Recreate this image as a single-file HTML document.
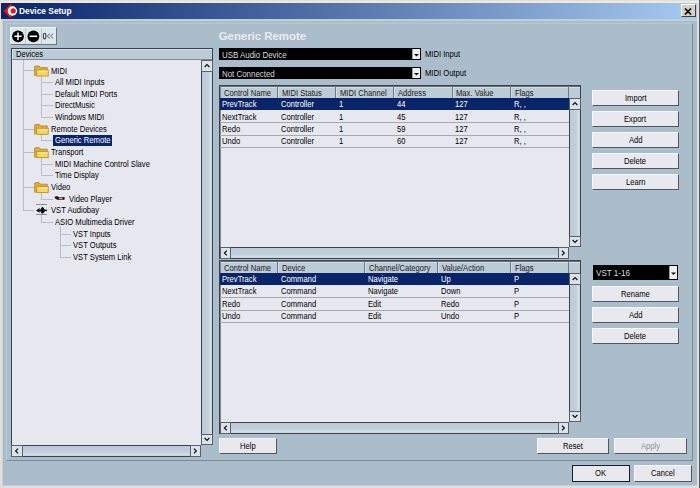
<!DOCTYPE html>
<html><head><meta charset="utf-8">
<style>
*{box-sizing:border-box}
html,body{margin:0;padding:0}
body{width:700px;height:488px;overflow:hidden;position:relative;background:#e2ded8;font-family:"Liberation Sans",sans-serif;font-size:8.4px;color:#000}
.a{position:absolute}
.t{position:absolute;white-space:nowrap}
.btn{position:absolute;background:#e6e7ee;border-top:1px solid #f7f7fb;border-left:1px solid #f7f7fb;border-right:2px solid #6f777e;border-bottom:2px solid #6f777e;text-align:center;line-height:13px;font-size:8.4px;white-space:nowrap}
</style></head><body>
<div class="a" style="left:0px;top:1px;width:700px;height:2px;background:#eeeae0"></div>
<div class="a" style="left:699px;top:0px;width:1px;height:488px;background:#5a5a58"></div>
<div class="a" style="left:2px;top:19px;width:695px;height:467px;background:#abbdcb"></div>
<div class="a" style="left:2px;top:19px;width:1px;height:467px;background:#c3d1db"></div>
<div class="a" style="left:2px;top:19px;width:695px;height:2px;background:#c0ced8"></div>
<div class="a" style="left:2px;top:485px;width:695px;height:1px;background:#bccfdc"></div>
<div class="a" style="left:6px;top:23px;width:687px;height:438px;background:#abbdcb;border-right:1px solid #7b8a96;border-bottom:1px solid #7b8a96;border-left:1px solid #bfcdd7;border-top:1px solid #b9c7d1"></div>
<div class="a" style="left:1px;top:3px;width:696px;height:16px;background:linear-gradient(to right,#0a246a,#a6caf0)"></div>
<svg class="a" style="left:2px;top:3px" width="18" height="16" viewBox="0 0 18 16">
<polygon points="1.3,8 8.2,0.9 15.3,8 8.2,15.1" fill="#e01010"/>
<circle cx="10.4" cy="8" r="4.7" fill="#fff"/>
<polygon points="10.4,3.3 15.3,8 10.4,12.7" fill="#fff"/>
<circle cx="11.2" cy="7.9" r="2.6" fill="#e81818"/>
</svg>
<div class="t" style="left:19.00px;top:4px;line-height:14px;font-size:8.4px;color:#fff;font-weight:bold;">Device Setup</div>
<div class="a" style="left:681px;top:4px;width:15px;height:13px;background:#d4d0c8;border-top:1px solid #fff;border-left:1px solid #fff;border-right:1px solid #404040;border-bottom:1px solid #404040"></div>
<svg class="a" style="left:684px;top:8px" width="8" height="7" viewBox="0 0 8 7"><path d="M1,0.5 L7,6.5 M7,0.5 L1,6.5" stroke="#000" stroke-width="1.6"/></svg>
<div class="a" style="left:10px;top:27px;width:47px;height:18px;background:#dee7eb;border-top:1px solid #f0f4f6;border-left:1px solid #f0f4f6;border-right:1px solid #6c7780;border-bottom:1px solid #6c7780"></div>
<div class="a" style="left:25px;top:28px;width:1px;height:16px;background:#c0cad0"></div>
<div class="a" style="left:41px;top:28px;width:1px;height:16px;background:#c0cad0"></div>
<div class="a" style="left:11px;top:48px;width:202px;height:409px;background:#e7e8ef;border:1px solid #3b444d"></div>
<div class="a" style="left:12px;top:49px;width:200px;height:11px;background:#bccbd6;border-bottom:1px solid #7d8b96;border-top:1px solid #d3dee6;border-left:1px solid #d3dee6"></div>
<div class="t" style="left:15.80px;top:47px;line-height:14px;font-size:8.4px;transform:scaleX(0.91);transform-origin:0 0;">Devices</div>
<div class="a" style="left:201px;top:60px;width:12px;height:385px;background:linear-gradient(to right,#bccad6,#c2cfda 60%,#d3dde6 85%,#c6d2dc);border-left:1px solid #3b444d;border-right:1px solid #3b444d"></div>
<div class="a" style="left:201px;top:60px;width:12px;height:11.5px;background:#dde3ea;box-shadow:inset 0 0 0 1px #56616b;"></div>
<div class="a" style="left:201px;top:433.5px;width:12px;height:11.5px;background:#dde3ea;box-shadow:inset 0 0 0 1px #56616b;"></div>
<div class="a" style="left:201px;top:445px;width:12px;height:12px;background:#abbdcb"></div>
<div class="a" style="left:11px;top:445px;width:190px;height:12px;background:linear-gradient(to bottom,#bccad6,#c2cfda 60%,#d3dde6 85%,#c6d2dc);border-top:1px solid #3b444d;border-bottom:1px solid #3b444d;border-left:1px solid #3b444d"></div>
<div class="a" style="left:11px;top:445px;width:11.5px;height:12px;background:#dde3ea;box-shadow:inset 0 0 0 1px #56616b;"></div>
<div class="a" style="left:189.5px;top:445px;width:11.5px;height:12px;background:#dde3ea;box-shadow:inset 0 0 0 1px #56616b;"></div>
<div class="a" style="left:23px;top:60px;width:1px;height:151px;background:#b9bdc4"></div>
<div class="a" style="left:24px;top:70px;width:10px;height:1px;background:#b9bdc4"></div>
<div class="t" style="left:51.30px;top:64px;line-height:14px;font-size:8.4px;transform:scaleX(0.91);transform-origin:0 0;">MIDI</div>
<div class="a" style="left:41px;top:82px;width:12px;height:1px;background:#b9bdc4"></div>
<div class="t" style="left:54.80px;top:75px;line-height:14px;font-size:8.4px;transform:scaleX(0.91);transform-origin:0 0;">All MIDI Inputs</div>
<div class="a" style="left:41px;top:94px;width:12px;height:1px;background:#b9bdc4"></div>
<div class="t" style="left:54.80px;top:87px;line-height:14px;font-size:8.4px;transform:scaleX(0.91);transform-origin:0 0;">Default MIDI Ports</div>
<div class="a" style="left:41px;top:105px;width:12px;height:1px;background:#b9bdc4"></div>
<div class="t" style="left:54.80px;top:98px;line-height:14px;font-size:8.4px;transform:scaleX(0.91);transform-origin:0 0;">DirectMusic</div>
<div class="a" style="left:41px;top:117px;width:12px;height:1px;background:#b9bdc4"></div>
<div class="t" style="left:54.80px;top:110px;line-height:14px;font-size:8.4px;transform:scaleX(0.91);transform-origin:0 0;">Windows MIDI</div>
<div class="a" style="left:24px;top:129px;width:10px;height:1px;background:#b9bdc4"></div>
<div class="t" style="left:51.30px;top:122px;line-height:14px;font-size:8.4px;transform:scaleX(0.91);transform-origin:0 0;">Remote Devices</div>
<div class="a" style="left:41px;top:140px;width:12px;height:1px;background:#b9bdc4"></div>
<div class="a" style="left:52.5px;top:135px;width:59.5px;height:11px;background:#0a246a"></div>
<div class="t" style="left:54.80px;top:133px;line-height:14px;font-size:8.4px;color:#fff;transform:scaleX(0.91);transform-origin:0 0;">Generic Remote</div>
<div class="a" style="left:24px;top:152px;width:10px;height:1px;background:#b9bdc4"></div>
<div class="t" style="left:51.30px;top:145px;line-height:14px;font-size:8.4px;transform:scaleX(0.91);transform-origin:0 0;">Transport</div>
<div class="a" style="left:41px;top:164px;width:12px;height:1px;background:#b9bdc4"></div>
<div class="t" style="left:54.80px;top:157px;line-height:14px;font-size:8.4px;transform:scaleX(0.91);transform-origin:0 0;">MIDI Machine Control Slave</div>
<div class="a" style="left:41px;top:175px;width:12px;height:1px;background:#b9bdc4"></div>
<div class="t" style="left:54.80px;top:168px;line-height:14px;font-size:8.4px;transform:scaleX(0.91);transform-origin:0 0;">Time Display</div>
<div class="a" style="left:24px;top:187px;width:10px;height:1px;background:#b9bdc4"></div>
<div class="t" style="left:51.30px;top:180px;line-height:14px;font-size:8.4px;transform:scaleX(0.91);transform-origin:0 0;">Video</div>
<div class="a" style="left:41px;top:199px;width:12px;height:1px;background:#b9bdc4"></div>
<div class="t" style="left:68.60px;top:192px;line-height:14px;font-size:8.4px;transform:scaleX(0.91);transform-origin:0 0;">Video Player</div>
<div class="a" style="left:24px;top:210px;width:10px;height:1px;background:#b9bdc4"></div>
<div class="a" style="left:36px;top:204px;width:11px;height:1px;background:#8a9098"></div>
<div class="a" style="left:36px;top:214px;width:11px;height:1px;background:#8a9098"></div>
<div class="t" style="left:50.50px;top:203px;line-height:14px;font-size:8.4px;transform:scaleX(0.91);transform-origin:0 0;">VST Audiobay</div>
<div class="a" style="left:41px;top:222px;width:12px;height:1px;background:#b9bdc4"></div>
<div class="t" style="left:54.80px;top:215px;line-height:14px;font-size:8.4px;transform:scaleX(0.91);transform-origin:0 0;">ASIO Multimedia Driver</div>
<div class="a" style="left:60px;top:234px;width:11px;height:1px;background:#b9bdc4"></div>
<div class="t" style="left:72.70px;top:227px;line-height:14px;font-size:8.4px;transform:scaleX(0.91);transform-origin:0 0;">VST Inputs</div>
<div class="a" style="left:60px;top:245px;width:11px;height:1px;background:#b9bdc4"></div>
<div class="t" style="left:72.70px;top:238px;line-height:14px;font-size:8.4px;transform:scaleX(0.91);transform-origin:0 0;">VST Outputs</div>
<div class="a" style="left:60px;top:257px;width:11px;height:1px;background:#b9bdc4"></div>
<div class="t" style="left:72.70px;top:250px;line-height:14px;font-size:8.4px;transform:scaleX(0.91);transform-origin:0 0;">VST System Link</div>
<div class="a" style="left:41px;top:75px;width:1px;height:43px;background:#b9bdc4"></div>
<div class="a" style="left:41px;top:134px;width:1px;height:7px;background:#b9bdc4"></div>
<div class="a" style="left:41px;top:157px;width:1px;height:19px;background:#b9bdc4"></div>
<div class="a" style="left:41px;top:192px;width:1px;height:8px;background:#b9bdc4"></div>
<div class="a" style="left:41px;top:215px;width:1px;height:8px;background:#b9bdc4"></div>
<div class="a" style="left:60px;top:227px;width:1px;height:31px;background:#b9bdc4"></div>
<div class="t" style="left:218.70px;top:29px;line-height:14px;font-size:11.4px;color:#e8ecf0;font-weight:bold;">Generic Remote</div>
<div class="a" style="left:219px;top:48px;width:202px;height:12px;background:#000"></div>
<div class="t" style="left:222.00px;top:48px;line-height:14px;font-size:8.7px;color:#dadada;transform:scaleX(0.91);transform-origin:0 0;">USB Audio Device</div>
<div class="a" style="left:412px;top:49px;width:8px;height:10px;background:#eceef2;border-left:1px solid #9aa0a6"></div>
<div class="a" style="left:219px;top:67px;width:202px;height:12px;background:#000"></div>
<div class="t" style="left:222.00px;top:67px;line-height:14px;font-size:8.7px;color:#dadada;transform:scaleX(0.91);transform-origin:0 0;">Not Connected</div>
<div class="a" style="left:412px;top:68px;width:8px;height:10px;background:#eceef2;border-left:1px solid #9aa0a6"></div>
<div class="t" style="left:424.60px;top:47px;line-height:14px;font-size:8.4px;transform:scaleX(0.91);transform-origin:0 0;">MIDI Input</div>
<div class="t" style="left:424.60px;top:66px;line-height:14px;font-size:8.4px;transform:scaleX(0.91);transform-origin:0 0;">MIDI Output</div>
<div class="a" style="left:219px;top:85px;width:350px;height:162px;background:#e7e8ef"></div>
<div class="a" style="left:219px;top:85px;width:362px;height:1px;background:#3b444d"></div>
<div class="a" style="left:220px;top:86px;width:360px;height:1px;background:#66717b"></div>
<div class="a" style="left:219px;top:85px;width:1px;height:162px;background:#3b444d"></div>
<div class="a" style="left:220px;top:86px;width:1px;height:161px;background:#7d8893"></div>
<div class="a" style="left:580px;top:85px;width:1px;height:162px;background:#3b444d"></div>
<div class="a" style="left:221px;top:87px;width:359px;height:11px;background:#bccbd6;border-top:1px solid #d3dee6"></div>
<div class="t" style="left:223.80px;top:86px;line-height:14px;font-size:8.4px;color:#1a1a1a;transform:scaleX(0.91);transform-origin:0 0;">Control Name</div>
<div class="a" style="left:277px;top:86px;width:1px;height:12px;background:#6f7c87"></div>
<div class="a" style="left:278px;top:87px;width:1px;height:11px;background:#d2dde5"></div>
<div class="t" style="left:281.60px;top:86px;line-height:14px;font-size:8.4px;color:#1a1a1a;transform:scaleX(0.91);transform-origin:0 0;">MIDI Status</div>
<div class="a" style="left:335px;top:86px;width:1px;height:12px;background:#6f7c87"></div>
<div class="a" style="left:336px;top:87px;width:1px;height:11px;background:#d2dde5"></div>
<div class="t" style="left:339.70px;top:86px;line-height:14px;font-size:8.4px;color:#1a1a1a;transform:scaleX(0.91);transform-origin:0 0;">MIDI Channel</div>
<div class="a" style="left:393px;top:86px;width:1px;height:12px;background:#6f7c87"></div>
<div class="a" style="left:394px;top:87px;width:1px;height:11px;background:#d2dde5"></div>
<div class="t" style="left:397.60px;top:86px;line-height:14px;font-size:8.4px;color:#1a1a1a;transform:scaleX(0.91);transform-origin:0 0;">Address</div>
<div class="a" style="left:452px;top:86px;width:1px;height:12px;background:#6f7c87"></div>
<div class="a" style="left:453px;top:87px;width:1px;height:11px;background:#d2dde5"></div>
<div class="t" style="left:456.40px;top:86px;line-height:14px;font-size:8.4px;color:#1a1a1a;transform:scaleX(0.91);transform-origin:0 0;">Max. Value</div>
<div class="a" style="left:510px;top:86px;width:1px;height:12px;background:#6f7c87"></div>
<div class="a" style="left:511px;top:87px;width:1px;height:11px;background:#d2dde5"></div>
<div class="t" style="left:514.90px;top:86px;line-height:14px;font-size:8.4px;color:#1a1a1a;transform:scaleX(0.91);transform-origin:0 0;">Flags</div>
<div class="a" style="left:568px;top:86px;width:1px;height:12px;background:#6f7c87"></div>
<div class="a" style="left:220px;top:98.20px;width:349px;height:12.30px;background:#0a246a"></div>
<div class="t" style="left:222.40px;top:97px;line-height:14px;font-size:8.4px;color:#fff;transform:scaleX(0.91);transform-origin:0 0;">PrevTrack</div>
<div class="t" style="left:280.60px;top:97px;line-height:14px;font-size:8.4px;color:#fff;transform:scaleX(0.91);transform-origin:0 0;">Controller</div>
<div class="t" style="left:338.70px;top:97px;line-height:14px;font-size:8.4px;color:#fff;transform:scaleX(0.91);transform-origin:0 0;">1</div>
<div class="t" style="left:396.60px;top:97px;line-height:14px;font-size:8.4px;color:#fff;transform:scaleX(0.91);transform-origin:0 0;">44</div>
<div class="t" style="left:455.40px;top:97px;line-height:14px;font-size:8.4px;color:#fff;transform:scaleX(0.91);transform-origin:0 0;">127</div>
<div class="t" style="left:513.90px;top:97px;line-height:14px;font-size:8.4px;color:#fff;transform:scaleX(0.91);transform-origin:0 0;">R, ,</div>
<div class="a" style="left:220px;top:122px;width:349px;height:1px;background:#a2abb3"></div>
<div class="t" style="left:222.40px;top:110px;line-height:14px;font-size:8.4px;color:#000;transform:scaleX(0.91);transform-origin:0 0;">NextTrack</div>
<div class="t" style="left:280.60px;top:110px;line-height:14px;font-size:8.4px;color:#000;transform:scaleX(0.91);transform-origin:0 0;">Controller</div>
<div class="t" style="left:338.70px;top:110px;line-height:14px;font-size:8.4px;color:#000;transform:scaleX(0.91);transform-origin:0 0;">1</div>
<div class="t" style="left:396.60px;top:110px;line-height:14px;font-size:8.4px;color:#000;transform:scaleX(0.91);transform-origin:0 0;">45</div>
<div class="t" style="left:455.40px;top:110px;line-height:14px;font-size:8.4px;color:#000;transform:scaleX(0.91);transform-origin:0 0;">127</div>
<div class="t" style="left:513.90px;top:110px;line-height:14px;font-size:8.4px;color:#000;transform:scaleX(0.91);transform-origin:0 0;">R, ,</div>
<div class="a" style="left:220px;top:135px;width:349px;height:1px;background:#a2abb3"></div>
<div class="t" style="left:222.40px;top:122px;line-height:14px;font-size:8.4px;color:#000;transform:scaleX(0.91);transform-origin:0 0;">Redo</div>
<div class="t" style="left:280.60px;top:122px;line-height:14px;font-size:8.4px;color:#000;transform:scaleX(0.91);transform-origin:0 0;">Controller</div>
<div class="t" style="left:338.70px;top:122px;line-height:14px;font-size:8.4px;color:#000;transform:scaleX(0.91);transform-origin:0 0;">1</div>
<div class="t" style="left:396.60px;top:122px;line-height:14px;font-size:8.4px;color:#000;transform:scaleX(0.91);transform-origin:0 0;">59</div>
<div class="t" style="left:455.40px;top:122px;line-height:14px;font-size:8.4px;color:#000;transform:scaleX(0.91);transform-origin:0 0;">127</div>
<div class="t" style="left:513.90px;top:122px;line-height:14px;font-size:8.4px;color:#000;transform:scaleX(0.91);transform-origin:0 0;">R, ,</div>
<div class="a" style="left:220px;top:147px;width:349px;height:1px;background:#a2abb3"></div>
<div class="t" style="left:222.40px;top:134px;line-height:14px;font-size:8.4px;color:#000;transform:scaleX(0.91);transform-origin:0 0;">Undo</div>
<div class="t" style="left:280.60px;top:134px;line-height:14px;font-size:8.4px;color:#000;transform:scaleX(0.91);transform-origin:0 0;">Controller</div>
<div class="t" style="left:338.70px;top:134px;line-height:14px;font-size:8.4px;color:#000;transform:scaleX(0.91);transform-origin:0 0;">1</div>
<div class="t" style="left:396.60px;top:134px;line-height:14px;font-size:8.4px;color:#000;transform:scaleX(0.91);transform-origin:0 0;">60</div>
<div class="t" style="left:455.40px;top:134px;line-height:14px;font-size:8.4px;color:#000;transform:scaleX(0.91);transform-origin:0 0;">127</div>
<div class="t" style="left:513.90px;top:134px;line-height:14px;font-size:8.4px;color:#000;transform:scaleX(0.91);transform-origin:0 0;">R, ,</div>
<div class="a" style="left:569px;top:98px;width:12px;height:149px;background:linear-gradient(to right,#bccad6,#c2cfda 60%,#d3dde6 85%,#c6d2dc);border-left:1px solid #3b444d;border-right:1px solid #3b444d"></div>
<div class="a" style="left:569px;top:98px;width:12px;height:11.5px;background:#dde3ea;box-shadow:inset 0 0 0 1px #56616b;"></div>
<div class="a" style="left:569px;top:235.5px;width:12px;height:11.5px;background:#dde3ea;box-shadow:inset 0 0 0 1px #56616b;"></div>
<div class="a" style="left:219px;top:247px;width:350px;height:12px;background:linear-gradient(to bottom,#bccad6,#c2cfda 60%,#d3dde6 85%,#c6d2dc);border:1px solid #3b444d;border-right:none"></div>
<div class="a" style="left:220px;top:247px;width:11px;height:12px;background:#dde3ea;box-shadow:inset 0 0 0 1px #56616b;"></div>
<div class="a" style="left:557.5px;top:247px;width:11.5px;height:12px;background:#dde3ea;box-shadow:inset 0 0 0 1px #56616b;"></div>
<div class="a" style="left:219px;top:260px;width:350px;height:162px;background:#e7e8ef"></div>
<div class="a" style="left:219px;top:260px;width:362px;height:1px;background:#3b444d"></div>
<div class="a" style="left:220px;top:261px;width:360px;height:1px;background:#66717b"></div>
<div class="a" style="left:219px;top:260px;width:1px;height:162px;background:#3b444d"></div>
<div class="a" style="left:220px;top:261px;width:1px;height:161px;background:#7d8893"></div>
<div class="a" style="left:580px;top:260px;width:1px;height:162px;background:#3b444d"></div>
<div class="a" style="left:221px;top:262px;width:359px;height:11px;background:#bccbd6;border-top:1px solid #d3dee6"></div>
<div class="t" style="left:223.80px;top:261px;line-height:14px;font-size:8.4px;color:#1a1a1a;transform:scaleX(0.91);transform-origin:0 0;">Control Name</div>
<div class="a" style="left:277px;top:261px;width:1px;height:12px;background:#6f7c87"></div>
<div class="a" style="left:278px;top:262px;width:1px;height:11px;background:#d2dde5"></div>
<div class="t" style="left:281.60px;top:261px;line-height:14px;font-size:8.4px;color:#1a1a1a;transform:scaleX(0.91);transform-origin:0 0;">Device</div>
<div class="a" style="left:364px;top:261px;width:1px;height:12px;background:#6f7c87"></div>
<div class="a" style="left:365px;top:262px;width:1px;height:11px;background:#d2dde5"></div>
<div class="t" style="left:369.10px;top:261px;line-height:14px;font-size:8.4px;color:#1a1a1a;transform:scaleX(0.91);transform-origin:0 0;">Channel/Category</div>
<div class="a" style="left:437px;top:261px;width:1px;height:12px;background:#6f7c87"></div>
<div class="a" style="left:438px;top:262px;width:1px;height:11px;background:#d2dde5"></div>
<div class="t" style="left:441.80px;top:261px;line-height:14px;font-size:8.4px;color:#1a1a1a;transform:scaleX(0.91);transform-origin:0 0;">Value/Action</div>
<div class="a" style="left:510px;top:261px;width:1px;height:12px;background:#6f7c87"></div>
<div class="a" style="left:511px;top:262px;width:1px;height:11px;background:#d2dde5"></div>
<div class="t" style="left:514.90px;top:261px;line-height:14px;font-size:8.4px;color:#1a1a1a;transform:scaleX(0.91);transform-origin:0 0;">Flags</div>
<div class="a" style="left:568px;top:261px;width:1px;height:12px;background:#6f7c87"></div>
<div class="a" style="left:220px;top:273.20px;width:349px;height:12.30px;background:#0a246a"></div>
<div class="t" style="left:222.40px;top:272px;line-height:14px;font-size:8.4px;color:#fff;transform:scaleX(0.91);transform-origin:0 0;">PrevTrack</div>
<div class="t" style="left:280.60px;top:272px;line-height:14px;font-size:8.4px;color:#fff;transform:scaleX(0.91);transform-origin:0 0;">Command</div>
<div class="t" style="left:368.10px;top:272px;line-height:14px;font-size:8.4px;color:#fff;transform:scaleX(0.91);transform-origin:0 0;">Navigate</div>
<div class="t" style="left:440.80px;top:272px;line-height:14px;font-size:8.4px;color:#fff;transform:scaleX(0.91);transform-origin:0 0;">Up</div>
<div class="t" style="left:513.90px;top:272px;line-height:14px;font-size:8.4px;color:#fff;transform:scaleX(0.91);transform-origin:0 0;">P</div>
<div class="a" style="left:220px;top:297px;width:349px;height:1px;background:#a2abb3"></div>
<div class="t" style="left:222.40px;top:284px;line-height:14px;font-size:8.4px;color:#000;transform:scaleX(0.91);transform-origin:0 0;">NextTrack</div>
<div class="t" style="left:280.60px;top:284px;line-height:14px;font-size:8.4px;color:#000;transform:scaleX(0.91);transform-origin:0 0;">Command</div>
<div class="t" style="left:368.10px;top:284px;line-height:14px;font-size:8.4px;color:#000;transform:scaleX(0.91);transform-origin:0 0;">Navigate</div>
<div class="t" style="left:440.80px;top:284px;line-height:14px;font-size:8.4px;color:#000;transform:scaleX(0.91);transform-origin:0 0;">Down</div>
<div class="t" style="left:513.90px;top:284px;line-height:14px;font-size:8.4px;color:#000;transform:scaleX(0.91);transform-origin:0 0;">P</div>
<div class="a" style="left:220px;top:310px;width:349px;height:1px;background:#a2abb3"></div>
<div class="t" style="left:222.40px;top:297px;line-height:14px;font-size:8.4px;color:#000;transform:scaleX(0.91);transform-origin:0 0;">Redo</div>
<div class="t" style="left:280.60px;top:297px;line-height:14px;font-size:8.4px;color:#000;transform:scaleX(0.91);transform-origin:0 0;">Command</div>
<div class="t" style="left:368.10px;top:297px;line-height:14px;font-size:8.4px;color:#000;transform:scaleX(0.91);transform-origin:0 0;">Edit</div>
<div class="t" style="left:440.80px;top:297px;line-height:14px;font-size:8.4px;color:#000;transform:scaleX(0.91);transform-origin:0 0;">Redo</div>
<div class="t" style="left:513.90px;top:297px;line-height:14px;font-size:8.4px;color:#000;transform:scaleX(0.91);transform-origin:0 0;">P</div>
<div class="a" style="left:220px;top:322px;width:349px;height:1px;background:#a2abb3"></div>
<div class="t" style="left:222.40px;top:309px;line-height:14px;font-size:8.4px;color:#000;transform:scaleX(0.91);transform-origin:0 0;">Undo</div>
<div class="t" style="left:280.60px;top:309px;line-height:14px;font-size:8.4px;color:#000;transform:scaleX(0.91);transform-origin:0 0;">Command</div>
<div class="t" style="left:368.10px;top:309px;line-height:14px;font-size:8.4px;color:#000;transform:scaleX(0.91);transform-origin:0 0;">Edit</div>
<div class="t" style="left:440.80px;top:309px;line-height:14px;font-size:8.4px;color:#000;transform:scaleX(0.91);transform-origin:0 0;">Undo</div>
<div class="t" style="left:513.90px;top:309px;line-height:14px;font-size:8.4px;color:#000;transform:scaleX(0.91);transform-origin:0 0;">P</div>
<div class="a" style="left:569px;top:273px;width:12px;height:149px;background:linear-gradient(to right,#bccad6,#c2cfda 60%,#d3dde6 85%,#c6d2dc);border-left:1px solid #3b444d;border-right:1px solid #3b444d"></div>
<div class="a" style="left:569px;top:273px;width:12px;height:11.5px;background:#dde3ea;box-shadow:inset 0 0 0 1px #56616b;"></div>
<div class="a" style="left:569px;top:410.5px;width:12px;height:11.5px;background:#dde3ea;box-shadow:inset 0 0 0 1px #56616b;"></div>
<div class="a" style="left:219px;top:422px;width:350px;height:12px;background:linear-gradient(to bottom,#bccad6,#c2cfda 60%,#d3dde6 85%,#c6d2dc);border:1px solid #3b444d;border-right:none"></div>
<div class="a" style="left:220px;top:422px;width:11px;height:12px;background:#dde3ea;box-shadow:inset 0 0 0 1px #56616b;"></div>
<div class="a" style="left:557.5px;top:422px;width:11.5px;height:12px;background:#dde3ea;box-shadow:inset 0 0 0 1px #56616b;"></div>
<div class="a" style="left:592px;top:90px;width:87px;height:16px;background:#e8e8ef;border-top:1px solid #f8f8fc;border-left:1px solid #f8f8fc;border-right:1px solid #4f5861;border-bottom:1px solid #4f5861;"></div>
<div class="t" style="left:624.67px;top:91px;line-height:14px;font-size:8.4px;transform:scaleX(0.91);transform-origin:0 0;">Import</div>
<div class="a" style="left:592px;top:111px;width:87px;height:16px;background:#e8e8ef;border-top:1px solid #f8f8fc;border-left:1px solid #f8f8fc;border-right:1px solid #4f5861;border-bottom:1px solid #4f5861;"></div>
<div class="t" style="left:624.45px;top:112px;line-height:14px;font-size:8.4px;transform:scaleX(0.91);transform-origin:0 0;">Export</div>
<div class="a" style="left:592px;top:132px;width:87px;height:16px;background:#e8e8ef;border-top:1px solid #f8f8fc;border-left:1px solid #f8f8fc;border-right:1px solid #4f5861;border-bottom:1px solid #4f5861;"></div>
<div class="t" style="left:628.70px;top:133px;line-height:14px;font-size:8.4px;transform:scaleX(0.91);transform-origin:0 0;">Add</div>
<div class="a" style="left:592px;top:153px;width:87px;height:16px;background:#e8e8ef;border-top:1px solid #f8f8fc;border-left:1px solid #f8f8fc;border-right:1px solid #4f5861;border-bottom:1px solid #4f5861;"></div>
<div class="t" style="left:624.45px;top:154px;line-height:14px;font-size:8.4px;transform:scaleX(0.91);transform-origin:0 0;">Delete</div>
<div class="a" style="left:592px;top:174px;width:87px;height:16px;background:#e8e8ef;border-top:1px solid #f8f8fc;border-left:1px solid #f8f8fc;border-right:1px solid #4f5861;border-bottom:1px solid #4f5861;"></div>
<div class="t" style="left:625.72px;top:175px;line-height:14px;font-size:8.4px;transform:scaleX(0.91);transform-origin:0 0;">Learn</div>
<div class="a" style="left:593px;top:265px;width:85px;height:15px;background:#000"></div>
<div class="t" style="left:596.00px;top:266px;line-height:14px;font-size:8.9px;color:#dcdcdc;transform:scaleX(0.91);transform-origin:0 0;">VST 1-16</div>
<div class="a" style="left:669px;top:266px;width:8px;height:13px;background:#eceef2;border-left:1px solid #9aa0a6"></div>
<div class="a" style="left:592px;top:286px;width:87px;height:16px;background:#e8e8ef;border-top:1px solid #f8f8fc;border-left:1px solid #f8f8fc;border-right:1px solid #4f5861;border-bottom:1px solid #4f5861;"></div>
<div class="t" style="left:621.05px;top:287px;line-height:14px;font-size:8.4px;transform:scaleX(0.91);transform-origin:0 0;">Rename</div>
<div class="a" style="left:592px;top:307px;width:87px;height:16px;background:#e8e8ef;border-top:1px solid #f8f8fc;border-left:1px solid #f8f8fc;border-right:1px solid #4f5861;border-bottom:1px solid #4f5861;"></div>
<div class="t" style="left:628.70px;top:308px;line-height:14px;font-size:8.4px;transform:scaleX(0.91);transform-origin:0 0;">Add</div>
<div class="a" style="left:592px;top:328px;width:87px;height:16px;background:#e8e8ef;border-top:1px solid #f8f8fc;border-left:1px solid #f8f8fc;border-right:1px solid #4f5861;border-bottom:1px solid #4f5861;"></div>
<div class="t" style="left:624.45px;top:329px;line-height:14px;font-size:8.4px;transform:scaleX(0.91);transform-origin:0 0;">Delete</div>
<div class="a" style="left:219px;top:438px;width:58px;height:16px;background:#e8e8ef;border-top:1px solid #f8f8fc;border-left:1px solid #f8f8fc;border-right:1px solid #4f5861;border-bottom:1px solid #4f5861;"></div>
<div class="t" style="left:240.14px;top:439px;line-height:14px;font-size:8.4px;transform:scaleX(0.91);transform-origin:0 0;">Help</div>
<div class="a" style="left:537px;top:438px;width:72px;height:16px;background:#e8e8ef;border-top:1px solid #f8f8fc;border-left:1px solid #f8f8fc;border-right:1px solid #4f5861;border-bottom:1px solid #4f5861;"></div>
<div class="t" style="left:563.02px;top:439px;line-height:14px;font-size:8.4px;transform:scaleX(0.91);transform-origin:0 0;">Reset</div>
<div class="a" style="left:614px;top:438px;width:73px;height:16px;background:#e8e8ef;border-top:1px solid #f8f8fc;border-left:1px solid #f8f8fc;border-right:1px solid #4f5861;border-bottom:1px solid #4f5861;"></div>
<div class="t" style="left:640.94px;top:439px;line-height:14px;font-size:8.4px;color:#8c949c;transform:scaleX(0.91);transform-origin:0 0;">Apply</div>
<div class="a" style="left:572px;top:465px;width:58px;height:17px;background:#e8e8ef;border:1px solid #1a1e22;"></div>
<div class="t" style="left:595.48px;top:466px;line-height:14px;font-size:8.4px;transform:scaleX(0.91);transform-origin:0 0;">OK</div>
<div class="a" style="left:634px;top:465px;width:58px;height:17px;background:#e8e8ef;border-top:1px solid #f8f8fc;border-left:1px solid #f8f8fc;border-right:1px solid #4f5861;border-bottom:1px solid #4f5861;"></div>
<div class="t" style="left:651.10px;top:466px;line-height:14px;font-size:8.4px;transform:scaleX(0.91);transform-origin:0 0;">Cancel</div>
<svg class="a" style="left:0;top:0" width="700" height="488" viewBox="0 0 700 488"><circle cx="18" cy="36.3" r="5.9" fill="#000"/><path d="M18,32.6V40M14.3,36.3H21.7" stroke="#fff" stroke-width="1.5"/><circle cx="33.4" cy="36.3" r="5.9" fill="#000"/><path d="M29.6,36.3H37.2" stroke="#fff" stroke-width="1.6"/><ellipse cx="44.6" cy="36.1" rx="1.3" ry="2.8" fill="none" stroke="#3c444c" stroke-width="1.1"/><path d="M50,33.6 L47.3,36.1 L50,38.6 M53.2,33.6 L50.5,36.1 L53.2,38.6" fill="none" stroke="#4c555d" stroke-width="0.9"/><path d="M204.6,67.05 L207.0,64.65 L209.4,67.05" stroke="#101418" stroke-width="1.25" fill="none"/><path d="M204.6,437.95 L207.0,440.35 L209.4,437.95" stroke="#101418" stroke-width="1.25" fill="none"/><path d="M18.05,448.6 L15.65,451.0 L18.05,453.4" stroke="#101418" stroke-width="1.25" fill="none"/><path d="M193.95,448.6 L196.35,451.0 L193.95,453.4" stroke="#101418" stroke-width="1.25" fill="none"/><path d="M34.6,76.0 V67.0 Q34.6,66.10000000000001 35.5,66.10000000000001 H39.3 L40.4,67.60000000000001 H47.2 V70.0" fill="#dcae3c" stroke="#b4862a" stroke-width="0.9"/><path d="M34.6,76.0 V68.4 H36.8 V76.0 Z" fill="#d9a93a"/><rect x="36.8" y="70.0" width="11.4" height="6.0" fill="#f4d862" stroke="#bf8f2a" stroke-width="0.9"/><rect x="37.4" y="70.60000000000001" width="10.2" height="1.3" fill="#fbeb98"/><path d="M34.6,134.3 V125.30000000000001 Q34.6,124.40000000000002 35.5,124.40000000000002 H39.3 L40.4,125.90000000000002 H47.2 V128.3" fill="#dcae3c" stroke="#b4862a" stroke-width="0.9"/><path d="M34.6,134.3 V126.70000000000002 H36.8 V134.3 Z" fill="#d9a93a"/><rect x="36.8" y="128.3" width="11.4" height="6.0" fill="#f4d862" stroke="#bf8f2a" stroke-width="0.9"/><rect x="37.4" y="128.9" width="10.2" height="1.3" fill="#fbeb98"/><path d="M34.6,157.62 V148.62 Q34.6,147.72 35.5,147.72 H39.3 L40.4,149.22 H47.2 V151.62" fill="#dcae3c" stroke="#b4862a" stroke-width="0.9"/><path d="M34.6,157.62 V150.01999999999998 H36.8 V157.62 Z" fill="#d9a93a"/><rect x="36.8" y="151.62" width="11.4" height="6.0" fill="#f4d862" stroke="#bf8f2a" stroke-width="0.9"/><rect x="37.4" y="152.22" width="10.2" height="1.3" fill="#fbeb98"/><path d="M34.6,192.6 V183.6 Q34.6,182.7 35.5,182.7 H39.3 L40.4,184.2 H47.2 V186.6" fill="#dcae3c" stroke="#b4862a" stroke-width="0.9"/><path d="M34.6,192.6 V184.99999999999997 H36.8 V192.6 Z" fill="#d9a93a"/><rect x="36.8" y="186.6" width="11.4" height="6.0" fill="#f4d862" stroke="#bf8f2a" stroke-width="0.9"/><rect x="37.4" y="187.2" width="10.2" height="1.3" fill="#fbeb98"/><path d="M54.5,196.8 L57,196.0 L59,197.2 L64.6,197.0 L64.6,199.8 L57.5,200.0 L55.2,198.6 Z" fill="#1c1c1c"/><rect x="59.3" y="197.8" width="3" height="1.3" fill="#d8d8d8"/><path d="M57,199.4 H63" stroke="#a83232" stroke-width="0.8"/><path d="M36,210.4 L39.6,208.0 L39.6,212.8 Z" fill="#111"/><rect x="39" y="209.7" width="8" height="1.4" fill="#111"/><path d="M40,210.4 L41.4,207.8 L42.8,206.8 L44,208.4 L45.4,210.4 L44,212.6 L42.8,213.8 L41.4,213.2 Z" fill="#111"/><path d="M414.0,54.0 L419.0,54.0 L416.5,56.6 Z" fill="#111"/><path d="M414.0,73.0 L419.0,73.0 L416.5,75.6 Z" fill="#111"/><path d="M572.6,105.05 L575.0,102.65 L577.4,105.05" stroke="#101418" stroke-width="1.25" fill="none"/><path d="M572.6,239.95 L575.0,242.35 L577.4,239.95" stroke="#101418" stroke-width="1.25" fill="none"/><path d="M226.8,250.6 L224.4,253.0 L226.8,255.4" stroke="#101418" stroke-width="1.25" fill="none"/><path d="M561.95,250.6 L564.35,253.0 L561.95,255.4" stroke="#101418" stroke-width="1.25" fill="none"/><path d="M572.6,280.05 L575.0,277.65 L577.4,280.05" stroke="#101418" stroke-width="1.25" fill="none"/><path d="M572.6,414.95 L575.0,417.35 L577.4,414.95" stroke="#101418" stroke-width="1.25" fill="none"/><path d="M226.8,425.6 L224.4,428.0 L226.8,430.4" stroke="#101418" stroke-width="1.25" fill="none"/><path d="M561.95,425.6 L564.35,428.0 L561.95,430.4" stroke="#101418" stroke-width="1.25" fill="none"/><path d="M671.0,272.5 L676.0,272.5 L673.5,275.1 Z" fill="#111"/></svg>
</body></html>
